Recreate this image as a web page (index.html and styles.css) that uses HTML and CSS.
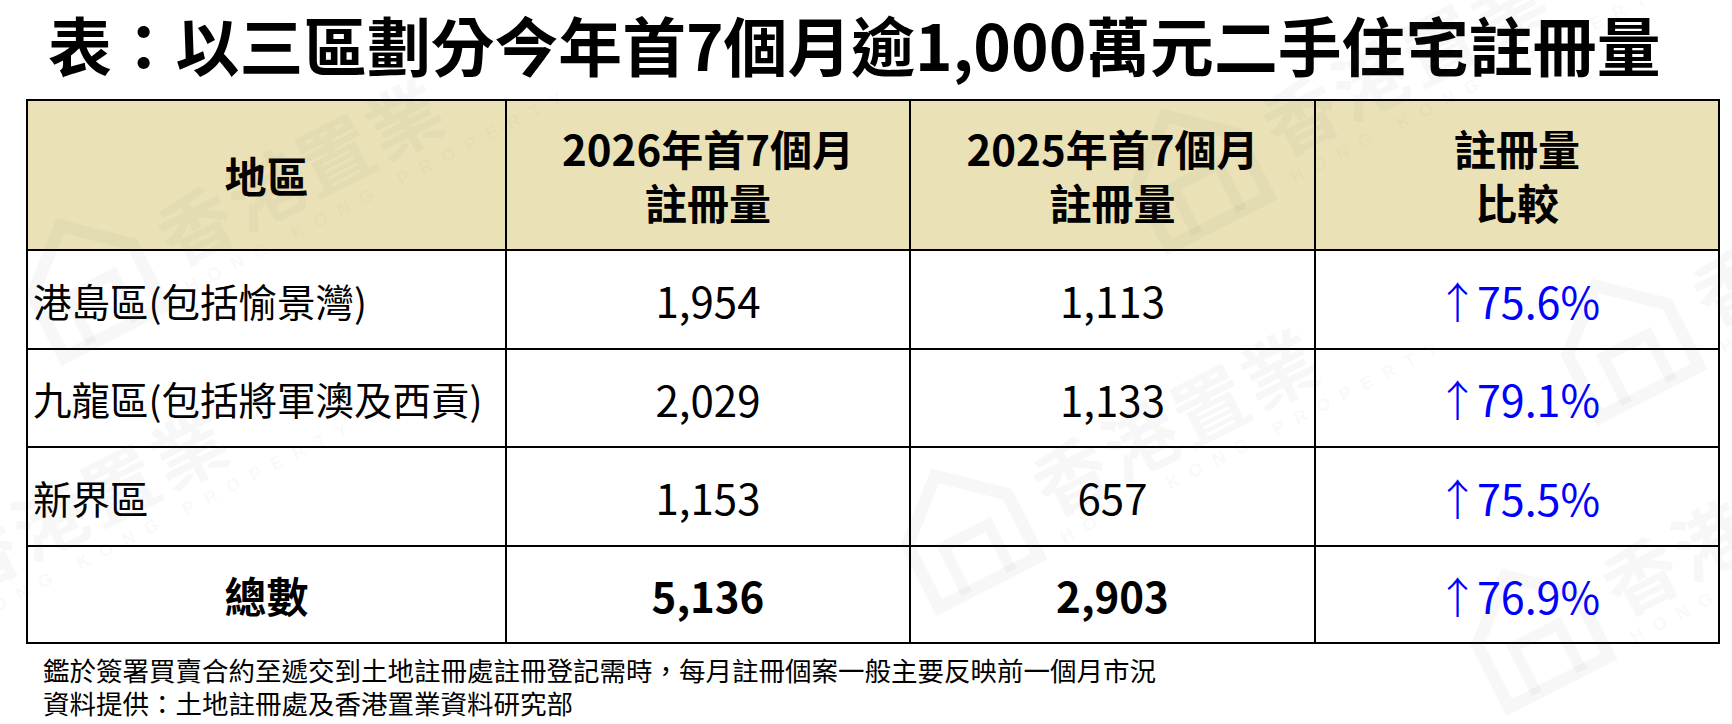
FILE: index.html
```html
<!DOCTYPE html>
<html lang="zh-Hant">
<head>
<meta charset="utf-8">
<title>以三區劃分今年首7個月逾1,000萬元二手住宅註冊量</title>
<link rel="stylesheet" href="styles.css">
</head>
<body>
<div class="page">
  <h1 class="title">表：以三區劃分今年首7個月逾1,000萬元二手住宅註冊量</h1>
  <table class="reg">
    <colgroup>
      <col class="c1"><col class="c2"><col class="c3"><col class="c4">
    </colgroup>
    <thead>
      <tr>
        <th>地區</th>
        <th>2026年首7個月<br>註冊量</th>
        <th>2025年首7個月<br>註冊量</th>
        <th>註冊量<br>比較</th>
      </tr>
    </thead>
    <tbody>
      <tr class="r1">
        <td class="label">港島區(包括愉景灣)</td>
        <td class="num">1,954</td>
        <td class="num">1,113</td>
        <td class="num pct"><span class="arrow">↑</span>75.6%</td>
      </tr>
      <tr class="r2">
        <td class="label">九龍區(包括將軍澳及西貢)</td>
        <td class="num">2,029</td>
        <td class="num">1,133</td>
        <td class="num pct"><span class="arrow">↑</span>79.1%</td>
      </tr>
      <tr class="r3">
        <td class="label">新界區</td>
        <td class="num">1,153</td>
        <td class="num">657</td>
        <td class="num pct"><span class="arrow">↑</span>75.5%</td>
      </tr>
      <tr class="total">
        <td class="label-total">總數</td>
        <td class="num strong">5,136</td>
        <td class="num strong">2,903</td>
        <td class="num pct"><span class="arrow">↑</span>76.9%</td>
      </tr>
    </tbody>
  </table>
  <div class="notes">
    <p>鑑於簽署買賣合約至遞交到土地註冊處註冊登記需時，每月註冊個案一般主要反映前一個月市況</p>
    <p>資料提供：土地註冊處及香港置業資料研究部</p>
  </div>

  <div class="watermarks" aria-hidden="true">
    <div class="wm wm-a">
      <svg class="wm-house" viewBox="0 0 100 100"><path d="M10 95 V45 L50 10 L90 45 V95 Z" fill="none" stroke="currentColor" stroke-width="9"/><path d="M32 95 V58 H68 V95" fill="none" stroke="currentColor" stroke-width="8"/></svg>
      <div class="wm-text"><span class="wm-cn">香港置業</span><span class="wm-en">HONG KONG PROPERTY</span></div>
    </div>
    <div class="wm wm-b">
      <svg class="wm-house" viewBox="0 0 100 100"><path d="M10 95 V45 L50 10 L90 45 V95 Z" fill="none" stroke="currentColor" stroke-width="9"/><path d="M32 95 V58 H68 V95" fill="none" stroke="currentColor" stroke-width="8"/></svg>
      <div class="wm-text"><span class="wm-cn">香港置業</span><span class="wm-en">HONG KONG PROPERTY</span></div>
    </div>
    <div class="wm wm-c">
      <svg class="wm-house" viewBox="0 0 100 100"><path d="M10 95 V45 L50 10 L90 45 V95 Z" fill="none" stroke="currentColor" stroke-width="9"/><path d="M32 95 V58 H68 V95" fill="none" stroke="currentColor" stroke-width="8"/></svg>
      <div class="wm-text"><span class="wm-cn">香港置業</span><span class="wm-en">HONG KONG PROPERTY</span></div>
    </div>
    <div class="wm wm-d">
      <svg class="wm-house" viewBox="0 0 100 100"><path d="M10 95 V45 L50 10 L90 45 V95 Z" fill="none" stroke="currentColor" stroke-width="9"/><path d="M32 95 V58 H68 V95" fill="none" stroke="currentColor" stroke-width="8"/></svg>
      <div class="wm-text"><span class="wm-cn">香港置業</span><span class="wm-en">HONG KONG PROPERTY</span></div>
    </div>
    <div class="wm wm-e">
      <svg class="wm-house" viewBox="0 0 100 100"><path d="M10 95 V45 L50 10 L90 45 V95 Z" fill="none" stroke="currentColor" stroke-width="9"/><path d="M32 95 V58 H68 V95" fill="none" stroke="currentColor" stroke-width="8"/></svg>
      <div class="wm-text"><span class="wm-cn">香港置業</span><span class="wm-en">HONG KONG PROPERTY</span></div>
    </div>
    <div class="wm wm-f">
      <svg class="wm-house" viewBox="0 0 100 100"><path d="M10 95 V45 L50 10 L90 45 V95 Z" fill="none" stroke="currentColor" stroke-width="9"/><path d="M32 95 V58 H68 V95" fill="none" stroke="currentColor" stroke-width="8"/></svg>
      <div class="wm-text"><span class="wm-cn">香港置業</span><span class="wm-en">HONG KONG PROPERTY</span></div>
    </div>
  </div>
</div>
</body>
</html>
```
FILE: styles.css
```css
html, body {
  margin: 0;
  padding: 0;
  background: #ffffff;
  overflow: hidden;
}

.page {
  position: relative;
  width: 1732px;
  height: 724px;
  font-family: "Noto Sans CJK TC", "Noto Sans", sans-serif;
  color: #000;
}

.title {
  margin: 0;
  padding: 3px 0 0 48px;
  font-size: 63.8px;
  line-height: 80px;
  font-weight: 700;
  white-space: nowrap;
}

.reg {
  margin: 16px 0 0 26px;
  width: 1692px;
  border-collapse: collapse;
  table-layout: fixed;
}

.reg col.c1 { width: 479px; }
.reg col.c2 { width: 404px; }
.reg col.c3 { width: 405px; }
.reg col.c4 { width: 404px; }

.reg th,
.reg td {
  border: 2px solid #000;
  padding: 0;
}

.reg th {
  height: 148px;
  background: #eae2b6;
  font-size: 42px;
  line-height: 54px;
  font-weight: 700;
  text-align: center;
  vertical-align: middle;
}

.reg tr.r1 td { height: 97px; }
.reg tr.r2 td { height: 96px; }
.reg tr.r3 td { height: 97px; }
.reg tr.total td { height: 95px; }

.reg td {
  vertical-align: middle;
}

.label {
  text-align: left;
  padding-left: 5px !important;
  font-size: 38.5px;
  font-weight: 400;
  white-space: nowrap;
}

.label-total {
  text-align: center;
  font-size: 42px;
  font-weight: 700;
}

.num {
  text-align: center;
  font-size: 42px;
  font-weight: 400;
}

.num.strong {
  font-weight: 700;
}

.reg td.pct {
  color: #0000ff;
  font-size: 43px;
  white-space: nowrap;
  padding-left: 12px;
}

.arrow {
  display: inline-block;
  font-weight: 300;
  margin-left: -10px;
  margin-right: -2px;
}

.notes {
  margin-top: 9px;
  padding-left: 43px;
  font-size: 26.5px;
  line-height: 33px;
  font-weight: 400;
}

.notes p {
  margin: 0;
  white-space: nowrap;
}

/* faint brand watermark overlay */
.watermarks {
  position: absolute;
  inset: 0;
  overflow: hidden;
  pointer-events: none;
}

.wm {
  position: absolute;
  display: flex;
  align-items: flex-end;
  gap: 14px;
  transform: rotate(-27deg);
  transform-origin: 0 100%;
  color: rgba(90, 90, 90, 0.05);
}

.wm-house {
  width: 140px;
  height: 140px;
  flex: none;
}

.wm-text {
  display: flex;
  flex-direction: column;
  align-items: flex-start;
}

.wm-cn {
  font-size: 74px;
  line-height: 84px;
  font-weight: 700;
  letter-spacing: 4px;
  white-space: nowrap;
}

.wm-en {
  font-family: "Liberation Sans", sans-serif;
  font-size: 18px;
  line-height: 26px;
  font-weight: 700;
  letter-spacing: 12px;
  white-space: nowrap;
}

.wm-a { left: 55px; top: 230px; }
.wm-b { left: 1160px; top: 120px; }
.wm-c { left: 1590px; top: 290px; }
.wm-d { left: 930px; top: 480px; }
.wm-e { left: -160px; top: 560px; }
.wm-f { left: 1500px; top: 580px; }
```
